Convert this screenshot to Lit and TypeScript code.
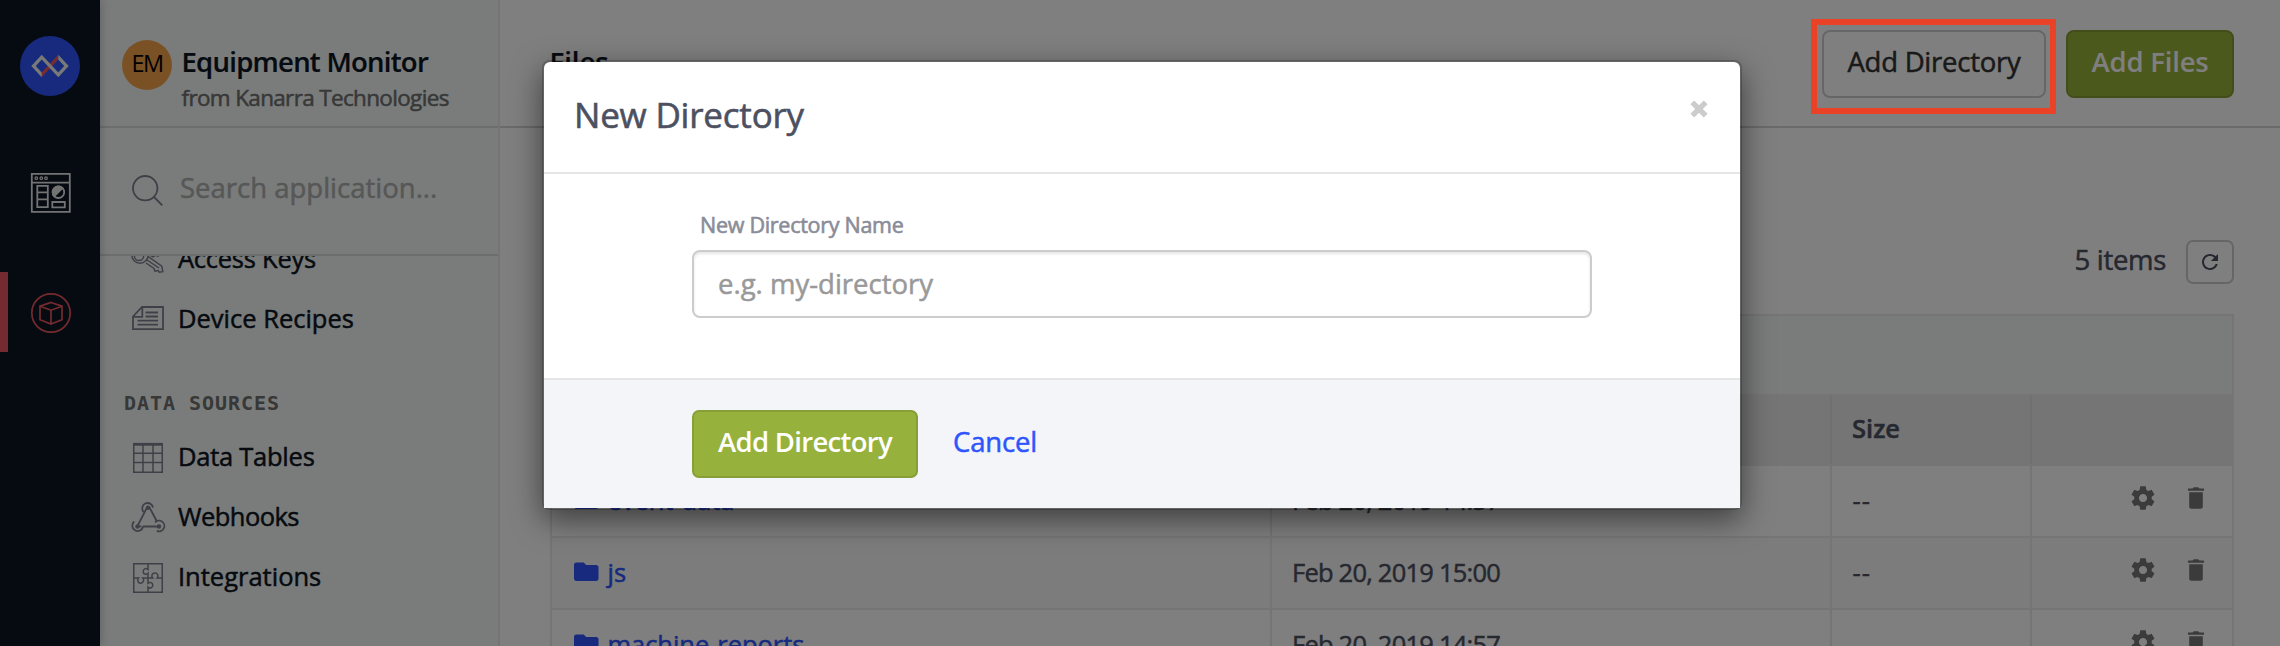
import { LitElement, html, css, svg } from "lit";
import { customElement, property } from "lit/decorators.js";

const icons: Record<string, unknown> = {
  keys: svg`<g fill="none" stroke="currentColor" stroke-width="1.5">
    <circle cx="10" cy="13" r="8.2"/><circle cx="9" cy="14" r="4.6"/>
    <path d="M16 21l8 5.500 1 2.600 3.200-.6 1 1.600 3.600-.4-1-5.600L18 14.500"/><path d="M17 18l12 8"/>
    <path d="M19 12.500l4 2.300 2.400-1.600 2.600 1 2-1.800 2.600.3 2-3.400-3-2.400-8 1.600"/></g>`,
  recipes: svg`<g fill="none" stroke="currentColor" stroke-width="1.8">
    <path d="M12 5h21v22.200H3V14.500z"/><path d="M12.300 5.500v9.300H3.500"/>
    <path d="M15.500 10.500h12.500M15.500 14.500h12.500M7.500 18.700h20.500M7.500 22.700h20.500"/></g>`,
  table: svg`<g fill="none" stroke="currentColor" stroke-width="1.5">
    <path d="M3.750 3.750h28.500v28.500H3.750zM13 4v28M23 4v28M4 13.200h28M4 22.500h28"/><path d="M3 4.300h30" stroke-width="2.8"/></g>`,
  hooks: svg`<g fill="none" stroke="currentColor" stroke-width="1.8">
    <path d="M17 7.500L7.500 26M19.500 7.500l7.200 13.500M8 26.300h3.500M13 26.500h15.500"/>
    <path d="M13.800 12.200a5.400 5.400 0 1 1 9.200-4.500"/><path d="M4.200 21.500a5.400 5.400 0 1 0 8.800 5"/>
    <path d="M25 22.300a5.400 5.400 0 1 1 1.800 8.600"/></g>
    <circle cx="18" cy="7.800" r="2.2" fill="currentColor"/><circle cx="7.500" cy="26.500" r="2.2" fill="currentColor"/><circle cx="29" cy="26.500" r="2.2" fill="currentColor"/>`,
  puzzle: svg`<g fill="none" stroke="currentColor" stroke-width="1.5">
    <path d="M3.750 3.750h28.500v28.500H3.750z"/>
    <path d="M18 4v5.500c-2-1.800-4.800-.6-4.800 1.900s2.800 3.700 4.800 1.900V18"/>
    <path d="M18 18h4.700c-1.800-2-.6-5 2.200-5s4 3 2.200 5H32"/>
    <path d="M18 18v5.300c2-1.800 4.800-.6 4.800 1.900s-2.800 3.700-4.800 1.900V32"/>
    <path d="M18 18h-5.200c1.800 2 .6 5.200-2.100 5.200s-4-3.200-2.200-5.200H4"/></g>`,
};

@customElement("nav-item")
class NavItem extends LitElement {
  @property() icon = "";
  @property() label = "";
  @property() fit = "";
  static styles = css`
    :host { display: flex; align-items: center; height: 60px; padding-left: 30px; gap: 12px; box-sizing: border-box; }
    svg { width: 36px; height: 36px; margin-top: 4px; color: #7e808e; flex: none; }
    .label { font-size: 25.5px; color: #0c1522; white-space: nowrap; -webkit-text-stroke: 0.5px; }
    .snug { letter-spacing: -0.25px; }
    .tight { letter-spacing: -0.55px; }
  `;
  render() {
    return html`<svg viewBox="0 0 36 36">${icons[this.icon]}</svg>
      <span class="label ${this.fit}">${this.label}</span>`;
  }
}

@customElement("side-rail")
class SideRail extends LitElement {
  static styles = css`
    :host { display: flex; flex-direction: column; align-items: center; width: 100px; flex: none; background: #0c1522; box-sizing: border-box; padding-top: 36px; box-shadow: 0 0 10px rgba(0, 0, 0, 0.25); z-index: 1; }
    .logo { width: 60px; height: 60px; flex: none; }
    .entry { width: 100%; height: 80px; box-sizing: border-box; display: flex; align-items: center; padding-left: 30px; flex: none; }
    .first { margin-top: 57px; }
    .active { margin-top: 39px; border-left: 8px solid #e8565f; padding-left: 22px; }
    .entry svg { width: 42px; height: 42px; }
  `;
  render() {
    return html`
      <svg class="logo" viewBox="0 0 60 60">
        <circle cx="30" cy="30" r="30" fill="#2e54fc"/>
        <path d="M21.700 41.300v-4.900L38.300 18.700v4.900z" fill="#ee5a5f"/>
        <path d="M21.700 18.700L11.300 30l10.400 11.300v-4.900L15.800 30l5.900-6.400 16.600 17.700L48.700 30 38.300 18.700v4.900L44.200 30l-5.900 6.400z" fill="#f2f2ee"/>
      </svg>
      <div class="entry first">
        <svg viewBox="0 0 42 42" fill="none" stroke="#e6e6e8" stroke-width="1.8">
          <path d="M1.800 1.800h38v38h-38zM1.800 10.600h38"/>
          <g stroke-width="1.2"><circle cx="6.300" cy="6.200" r="1.3"/><circle cx="11.300" cy="6.200" r="1.3"/><circle cx="16" cy="6.200" r="1.3"/></g>
          <path d="M7.300 13.800h10.500v21.400H7.300zM7.300 20.300h10.500M7.300 27.300h10.500M22.300 30h12.500v5.300H22.300z"/>
          <circle cx="28.400" cy="20.200" r="5.8"/><path d="M24.300 24.300a5.800 5.800 0 0 1 8.200-8.200z" fill="#e6e6e8"/>
        </svg>
      </div>
      <div class="entry active">
        <svg viewBox="0 0 42 42" fill="none" stroke="#e8565f" stroke-width="1.7">
          <circle cx="21" cy="22" r="19.2"/>
          <path d="M21 11.500l11 3.700v13.500l-11 4.400-11-4.400V15.200zM10 15.200l11 4 11-4M21 19.200v13.900"/>
        </svg>
      </div>`;
  }
}

@customElement("side-bar")
class SideBar extends LitElement {
  static styles = css`
    :host { display: flex; flex-direction: column; width: 400px; height: 646px; flex: none; background: #f5f8f6; box-sizing: border-box; border-right: 2px solid #e9ebea; overflow: hidden; }
    .app { height: 128px; flex: none; box-sizing: border-box; border-bottom: 2px solid #d9dad9; display: flex; padding: 40px 0 0 22px; gap: 9.5px; }
    .avatar { width: 50px; height: 50px; border-radius: 50%; background: #f5a24b; display: flex; align-items: center; justify-content: center; font-size: 23.5px; letter-spacing: -1.5px; padding-bottom: 4px; box-sizing: border-box; color: #000; flex: none; }
    .names { display: flex; flex-direction: column; white-space: nowrap; }
    .title { font-size: 27.5px; font-weight: 600; line-height: 43px; letter-spacing: -0.74px; color: #0c1522; -webkit-text-stroke: 0.2px; }
    .sub { font-size: 22.5px; line-height: 30px; letter-spacing: -0.66px; color: #6f706f; -webkit-text-stroke: 0.5px; }
    .search { height: 128px; flex: none; box-sizing: border-box; border-bottom: 2px solid #d9dad9; display: flex; align-items: center; padding: 0 0 7px 30px; gap: 14px; font-size: 27.5px; color: #adafae; -webkit-text-stroke: 0.5px; }
    .search svg { width: 36px; height: 36px; margin-top: 6px; color: #7e808e; -webkit-text-stroke: 0; }
    .list { flex: 1; min-height: 0; overflow: hidden; }
    .scrolled { margin-top: -28px; }
    .heading { margin: 35px 0 3px 24px; font: bold 20px/40px "DejaVu Sans Mono", monospace; letter-spacing: 0.95px; color: #6f706f; }
  `;
  render() {
    return html`
      <div class="app">
        <div class="avatar">EM</div>
        <div class="names"><div class="title">Equipment Monitor</div><div class="sub">from Kanarra Technologies</div></div>
      </div>
      <div class="search">
        <svg viewBox="0 0 36 36" fill="none" stroke="currentColor" stroke-width="1.8"><circle cx="15.200" cy="15.200" r="12.2"/><path d="M24 24l8.300 8.300"/></svg>
        <span>Search application...</span>
      </div>
      <div class="list">
        <div class="scrolled">
          <nav-item icon="keys" label="Access Keys" fit="snug"></nav-item>
          <nav-item icon="recipes" label="Device Recipes"></nav-item>
          <div class="heading">DATA SOURCES</div>
          <nav-item icon="table" label="Data Tables" fit="snug"></nav-item>
          <nav-item icon="hooks" label="Webhooks" fit="tight"></nav-item>
          <nav-item icon="puzzle" label="Integrations"></nav-item>
        </div>
      </div>`;
  }
}

const rows = [
  { name: "event-data", date: "Feb 20, 2019 14:57" },
  { name: "js", date: "Feb 20, 2019 15:00" },
  { name: "machine-reports", date: "Feb 20, 2019 14:57" },
];

@customElement("files-table")
class FilesTable extends LitElement {
  static styles = css`
    :host { display: block; border: 2px solid #ebebeb; border-bottom: none; color: #4c5060; font-size: 25.5px; -webkit-text-stroke: 0.5px; }
    .tools { height: 78px; background: #f5f8f6; }
    .row { display: grid; grid-template-columns: 720px 560px 200px 200px; height: 72px; box-sizing: border-box; border-bottom: 2px solid #ebebeb; background: #fff; }
    .alt { background: #f9f9f9; }
    .head { background: #ebebeb; border-top: 2px solid #ebebeb; font-weight: 600; }
    .cell { display: flex; align-items: center; padding: 0 0 2px 20px; border-right: 2px solid #ebebeb; white-space: nowrap; }
    .head .cell { border-color: #e1e1e1; padding-bottom: 4px; }
    .cell:last-child { border-right: none; }
    .date { letter-spacing: -0.78px; padding-left: 20px; }
    .size { letter-spacing: 1px; padding-left: 20.5px; }
    .name { color: #2e54fc; gap: 8.5px; padding-left: 22px; letter-spacing: -0.05px; }
    .name svg { width: 25px; height: 20px; }
    .actions { justify-content: flex-end; gap: 29px; padding-right: 26px; padding-bottom: 6px; color: #777; }
    .actions svg { width: 28px; height: 28px; }
    .actions svg + svg { width: 20px; height: 24px; }
  `;
  render() {
    return html`
      <div class="tools"></div>
      <div class="row head">
        <div class="cell"></div><div class="cell"></div><div class="cell">Size</div><div class="cell"></div>
      </div>
      ${rows.map((r, i) => html`
        <div class="row ${i % 2 ? "alt" : ""}">
          <div class="cell name">
            <svg viewBox="0 0 25 20" fill="currentColor"><path d="M2.200.5h7.500l2.500 2.500h10.100c1.200 0 2.200 1 2.200 2.200v11.600c0 1.200-1 2.200-2.200 2.200H2.200C1 19 0 18 0 16.800V2.700C0 1.500 1 .5 2.200.5z"/></svg>
            <span>${r.name}</span>
          </div>
          <div class="cell date">${r.date}</div>
          <div class="cell size">--</div>
          <div class="cell actions">
            <svg viewBox="0 0 24 24" fill="currentColor"><path d="M19.430 12.980c.04-.32.07-.64.07-.98s-.03-.66-.07-.98l2.110-1.650c.19-.15.24-.42.12-.64l-2-3.460c-.12-.22-.39-.3-.61-.22l-2.490 1c-.52-.4-1.080-.73-1.690-.98l-.38-2.650C14.460 2.180 14.250 2 14 2h-4c-.25 0-.46.18-.49.42l-.38 2.650c-.61.25-1.170.59-1.690.98l-2.490-1c-.23-.09-.49 0-.61.22l-2 3.460c-.13.22-.07.49.12.64l2.110 1.650c-.04.32-.07.65-.07.98s.03.66.07.98l-2.110 1.650c-.19.15-.24.42-.12.64l2 3.460c.12.22.39.3.61.22l2.490-1c.52.4 1.080.73 1.690.98l.38 2.650c.03.24.24.42.49.42h4c.25 0 .46-.18.49-.42l.38-2.650c.61-.25 1.170-.59 1.690-.98l2.490 1c.23.09.49 0 .61-.22l2-3.460c.12-.22.07-.49-.12-.64l-2.110-1.650zM12 15.500c-1.930 0-3.500-1.570-3.500-3.500s1.570-3.500 3.500-3.500 3.500 1.570 3.500 3.500-1.570 3.500-3.500 3.500z"/></svg>
            <svg viewBox="0 0 20 24" fill="currentColor"><path d="M2 2.500h4.500L7.800 1.300h4.400l1.300 1.200H18v2.300H2zM3.200 6.300h13.600v14.500c0 1-.8 1.900-1.900 1.900H5.100c-1 0-1.900-.8-1.900-1.900z"/></svg>
          </div>
        </div>`)}`;
  }
}

@customElement("files-page")
class FilesPage extends LitElement {
  static styles = css`
    :host { display: block; flex: 1; min-width: 0; height: 646px; overflow: hidden; background: #fff; color: #4c5060; }
    .bar { height: 128px; box-sizing: border-box; border-bottom: 2px solid #d5d5d5; display: flex; align-items: flex-start; padding: 30px 46px 0 49.5px; font-size: 27.5px; }
    .title { flex: 1; font-weight: 600; color: #0c1522; line-height: 63px; -webkit-text-stroke: 0.2px; }
    .btn { height: 68px; box-sizing: border-box; border: 2px solid #ccc; border-radius: 8px; line-height: 60px; color: #333; white-space: nowrap; text-align: center; }
    .dir { width: 224px; margin-right: 20px; letter-spacing: -0.25px; -webkit-text-stroke: 0.5px; }
    .add { width: 168px; background: #97b23b; border-color: #859d33; color: #fff; font-weight: 600; letter-spacing: -0.2px; }
    .meta { display: flex; justify-content: flex-end; align-items: flex-start; padding: 112px 46px 30px 0; gap: 20px; font-size: 27.5px; line-height: 39px; letter-spacing: -0.3px; -webkit-text-stroke: 0.5px; }
    .refresh { width: 48px; height: 44px; box-sizing: border-box; border: 2px solid #ccc; border-radius: 7px; display: flex; align-items: center; justify-content: center; }
    .refresh svg { width: 24px; height: 24px; }
    files-table { margin: 0 46px 0 50px; }
  `;
  render() {
    return html`
      <div class="bar">
        <div class="title">Files</div>
        <div class="btn dir">Add Directory</div>
        <div class="btn add">Add Files</div>
      </div>
      <div class="meta">
        <span>5 items</span>
        <div class="refresh"><svg viewBox="0 0 24 24" fill="#4c5060"><path d="M17.650 6.350C16.200 4.900 14.210 4 12 4c-4.420 0-7.990 3.580-7.990 8s3.570 8 7.990 8c3.730 0 6.840-2.550 7.730-6h-2.080c-.82 2.330-3.040 4-5.650 4-3.310 0-6-2.690-6-6s2.690-6 6-6c1.660 0 3.140.69 4.220 1.780L13 11h7V4l-2.350 2.350z"/></svg></div>
      </div>
      <files-table></files-table>`;
  }
}

@customElement("new-directory-dialog")
class NewDirectoryDialog extends LitElement {
  static styles = css`
    :host { display: block; width: 1200px; box-sizing: border-box; border: 2px solid rgba(0, 0, 0, 0.2); border-radius: 8px; background: #fff; background-clip: padding-box; box-shadow: 0 10px 30px rgba(0, 0, 0, 0.5); }
    .head { height: 112px; box-sizing: border-box; border-bottom: 2px solid #e5e5e5; display: flex; justify-content: space-between; padding: 0 32px 6px 30px; align-items: center; }
    .title { font-size: 35px; letter-spacing: -0.2px; color: #4c5060; -webkit-text-stroke: 0.6px; }
    .head svg { width: 18px; height: 18px; margin-bottom: 11px; }
    .body { height: 204px; box-sizing: border-box; padding: 34px 148px 0; display: flex; flex-direction: column; }
    .label { font-size: 21.5px; letter-spacing: -0.28px; line-height: 33px; color: #8a8c98; padding-left: 8px; margin-bottom: 9px; -webkit-text-stroke: 0.6px; }
    .field { height: 68px; box-sizing: border-box; border: 2px solid #ccc; border-radius: 8px; box-shadow: inset 0 2px 3px rgba(0, 0, 0, 0.1); padding-left: 24px; font-size: 27.5px; line-height: 63px; color: #999; -webkit-text-stroke: 0.5px; }
    .foot { height: 130px; box-sizing: border-box; border-top: 2px solid #e5e5e5; background: #f4f5f8; padding: 30px 148px; display: flex; font-size: 27.5px; line-height: 60px; }
    .add { width: 226px; height: 68px; box-sizing: border-box; border: 2px solid #879f36; border-radius: 7px; background: #97b13d; color: #fff; font-weight: 600; letter-spacing: -0.7px; text-align: center; white-space: nowrap; }
    .cancel { color: #2e54fc; letter-spacing: -0.15px; padding: 2px 0 0 35px; -webkit-text-stroke: 0.5px; }
  `;
  render() {
    return html`
      <div class="head">
        <span class="title">New Directory</span>
        <svg viewBox="0 0 18 18" stroke="#ccc" stroke-width="5.4" fill="none"><path d="M2.300 2.300l13.400 13.400M15.700 2.300L2.300 15.700"/></svg>
      </div>
      <div class="body">
        <div class="label">New Directory Name</div>
        <div class="field">e.g. my-directory</div>
      </div>
      <div class="foot">
        <div class="add">Add Directory</div>
        <div class="cancel">Cancel</div>
      </div>`;
  }
}

@customElement("app-root")
class AppRoot extends LitElement {
  static styles = css`
    :host { display: block; position: relative; width: 2280px; height: 646px; overflow: hidden; font-family: "Open Sans", "Noto Sans", sans-serif; }
    .page { display: flex; height: 646px; }
    .overlay { position: absolute; inset: 0; background: rgba(0, 0, 0, 0.5); display: flex; justify-content: center; align-items: flex-start; padding-top: 60px; padding-left: 4px; box-sizing: border-box; z-index: 2; }
    .marker { position: absolute; left: 1811px; top: 19px; width: 245px; height: 95px; box-sizing: border-box; border: 6px solid #ea4227; z-index: 3; }
  `;
  render() {
    return html`
      <div class="page"><side-rail></side-rail><side-bar></side-bar><files-page></files-page></div>
      <div class="overlay"><new-directory-dialog></new-directory-dialog></div>
      <div class="marker"></div>`;
  }
}
